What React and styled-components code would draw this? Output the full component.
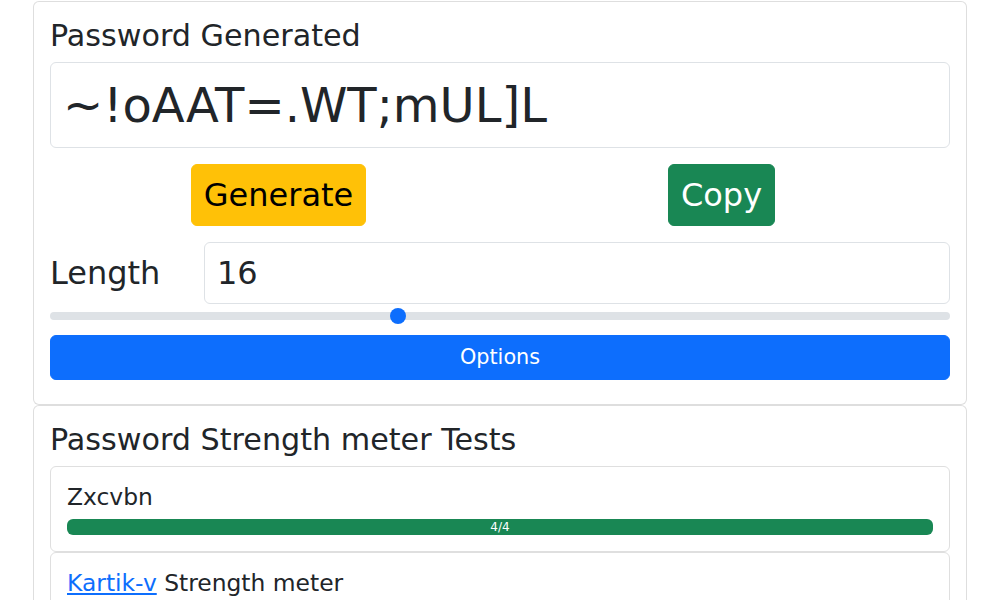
import React from "react";
import styled, { createGlobalStyle } from "styled-components";

const Global = createGlobalStyle`
  html, body { margin: 0; padding: 0; background: #fff; overflow: hidden; }
  body {
    font-family: "DejaVu Sans", "Liberation Sans", sans-serif;
    color: #212529;
    font-size: 16px;
    line-height: 1.5;
  }
  *, *::before, *::after { box-sizing: border-box; }
  input, button { font-family: inherit; }
`;

const Page = styled.div`
  max-width: 934px;
  margin: 1px auto 0;
  display: flex;
  flex-direction: column;
`;

const Card = styled.section`
  border: 1px solid rgba(0, 0, 0, 0.13);
  border-radius: 6px;
  padding: 16px;
  background: #fff;
  display: flex;
  flex-direction: column;
`;

const Title = styled.h2`
  margin: 0 0 8px;
  font-size: 30.2px;
  font-weight: 400;
  line-height: 36px;
`;

const PasswordField = styled.input`
  display: block;
  width: 100%;
  height: 86px;
  margin: 0 0 16px;
  padding: 6px 12px;
  font-size: 48px;
  line-height: 1.5;
  color: #212529;
  background: #fff;
  border: 1px solid #dee2e6;
  border-radius: 6px;
  outline: none;
`;

const ButtonRow = styled.div`
  display: grid;
  grid-template-columns: 1fr 1fr;
  justify-items: center;
  padding: 0 7px;
  margin-bottom: 16px;
`;

const BigButton = styled.button`
  font-size: 32px;
  line-height: 48px;
  padding: 6px 12px;
  border: 1px solid ${(p) => p.$bg};
  border-radius: 6px;
  background: ${(p) => p.$bg};
  color: ${(p) => p.$fg};
  cursor: pointer;
`;

const LengthRow = styled.div`
  display: grid;
  grid-template-columns: 130px 1fr;
  column-gap: 24px;
  align-items: center;
`;

const Label = styled.label`
  font-size: 32px;
  line-height: 48px;
`;

const NumberField = styled.input`
  display: block;
  width: 100%;
  height: 62px;
  padding: 6px 12px;
  font-size: 32px;
  line-height: 48px;
  color: #212529;
  border: 1px solid #dee2e6;
  border-radius: 6px;
  outline: none;
`;

const Range = styled.input`
  display: block;
  width: 100%;
  height: 24px;
  margin: 0 0 7px;
  padding: 0;
  background: transparent;
  -webkit-appearance: none;
  appearance: none;
  &:focus { outline: none; }
  &::-webkit-slider-runnable-track {
    height: 8px;
    background: #dee2e6;
    border-radius: 16px;
    border: 0;
  }
  &::-webkit-slider-thumb {
    -webkit-appearance: none;
    appearance: none;
    width: 16px;
    height: 16px;
    margin-top: -4px;
    border: 0;
    border-radius: 50%;
    background: #0d6efd;
  }
`;

const WideButton = styled.button`
  display: block;
  width: 100%;
  margin-bottom: 8px;
  padding: 6px 12px;
  font-size: 20.8px;
  line-height: 31px;
  color: #fff;
  background: #0d6efd;
  border: 1px solid #0d6efd;
  border-radius: 6px;
  cursor: pointer;
`;

const MeterList = styled.div`
  display: flex;
  flex-direction: column;
`;

const MeterItem = styled.div`
  border: 1px solid #dfdfdf;
  border-radius: 6px;
  padding: 16px;
`;

const MeterName = styled.h4`
  margin: 0 0 8px;
  font-size: 23.4px;
  font-weight: 400;
  line-height: 28px;
`;

const Link = styled.a`
  color: #0d6efd;
  text-decoration: underline;
`;

const Progress = styled.div`
  display: flex;
  height: 16px;
  overflow: hidden;
  border-radius: 6px;
  background: #e9ecef;
  font-size: 12px;
`;

const ProgressBar = styled.div`
  display: flex;
  align-items: center;
  justify-content: center;
  background: ${(p) => p.$color};
  color: #fff;
  line-height: 1;
  white-space: nowrap;
`;

export default function App() {
  const [len, setLen] = React.useState(16);
  const meters = [
    { name: "Zxcvbn", score: 4, max: 4, color: "#198754" },
    { name: "Strength meter", link: "Kartik-v", score: 4, max: 4, color: "#198754" },
  ];
  return (
    <>
      <Global />
      <Page>
        <Card>
          <Title>Password Generated</Title>
          <PasswordField readOnly value="~!oAAT=.WT;mUL]L" />
          <ButtonRow>
            <BigButton $bg="#ffc107" $fg="#000">Generate</BigButton>
            <BigButton $bg="#198754" $fg="#fff">Copy</BigButton>
          </ButtonRow>
          <LengthRow>
            <Label htmlFor="len">Length</Label>
            <NumberField
              id="len"
              type="text"
              value={len}
              onChange={(e) => setLen(Number(e.target.value) || 0)}
            />
          </LengthRow>
          <Range
            type="range"
            min={1}
            max={40}
            value={len}
            onChange={(e) => setLen(Number(e.target.value))}
          />
          <WideButton>Options</WideButton>
        </Card>
        <Card>
          <Title>Password Strength meter Tests</Title>
          <MeterList>
            {meters.map((m) => (
              <MeterItem key={m.name}>
                <MeterName>
                  {m.link ? (
                    <>
                      <Link href="#">{m.link}</Link> {m.name}
                    </>
                  ) : (
                    m.name
                  )}
                </MeterName>
                <Progress>
                  <ProgressBar
                    $color={m.color}
                    style={{ width: `${(m.score / m.max) * 100}%` }}
                  >
                    {m.score}/{m.max}
                  </ProgressBar>
                </Progress>
              </MeterItem>
            ))}
          </MeterList>
        </Card>
      </Page>
    </>
  );
}
